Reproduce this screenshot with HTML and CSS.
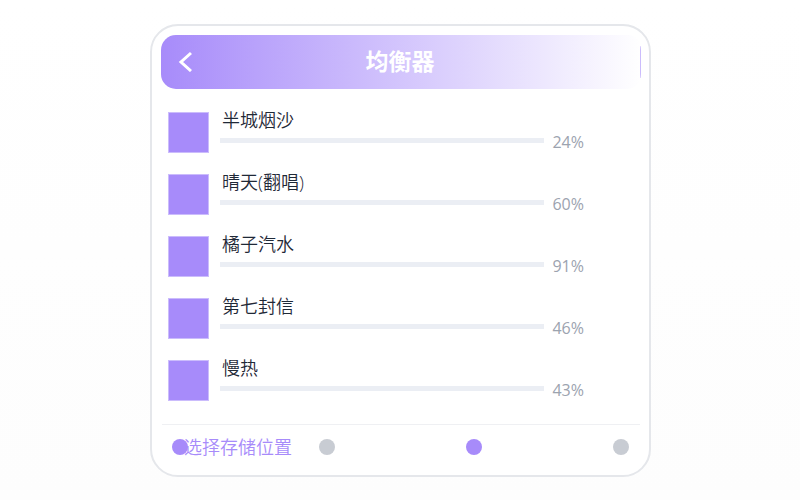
FILE: index.html
```html
<!DOCTYPE html>
<html lang="zh-CN">
<head>
    <meta charset="UTF-8">
    <meta name="viewport" content="width=device-width, initial-scale=1.0">
    <title>均衡器</title>
    <link rel="stylesheet" href="styles.css">
</head>
<body>
    <main class="card">
        <header class="header">
            <button class="back" type="button" aria-label="返回">
                <svg width="14" height="22" viewBox="0 0 14 22" fill="none" stroke="#fff" stroke-width="3">
                    <path d="M13 3 L3 12 L13 21"/>
                </svg>
            </button>
            <h1 class="title">均衡器</h1>
        </header>

        <ul class="list">
            <li class="row">
                <div class="cover"></div>
                <div class="info">
                    <label class="name" for="song1">半城烟沙</label>
                    <progress class="bar" id="song1" value="24" max="100"></progress>
                </div>
                <span class="percent">24%</span>
            </li>
            <li class="row">
                <div class="cover"></div>
                <div class="info">
                    <label class="name" for="song2">晴天(翻唱)</label>
                    <progress class="bar" id="song2" value="60" max="100"></progress>
                </div>
                <span class="percent">60%</span>
            </li>
            <li class="row">
                <div class="cover"></div>
                <div class="info">
                    <label class="name" for="song3">橘子汽水</label>
                    <progress class="bar" id="song3" value="91" max="100"></progress>
                </div>
                <span class="percent">91%</span>
            </li>
            <li class="row">
                <div class="cover"></div>
                <div class="info">
                    <label class="name" for="song4">第七封信</label>
                    <progress class="bar" id="song4" value="46" max="100"></progress>
                </div>
                <span class="percent">46%</span>
            </li>
            <li class="row">
                <div class="cover"></div>
                <div class="info">
                    <label class="name" for="song5">慢热</label>
                    <progress class="bar" id="song5" value="43" max="100"></progress>
                </div>
                <span class="percent">43%</span>
            </li>
        </ul>

        <footer class="footer">
            <div class="dot active"><span class="dot-label">选择存储位置</span></div>
            <div class="dot"></div>
            <div class="dot active"></div>
            <div class="dot"></div>
        </footer>
    </main>
</body>
</html>
```

FILE: styles.css
```css
* {
    box-sizing: border-box;
}
body {
    margin: 0;
    padding: 1px 0 0 1px;
    min-height: 100vh;
    display: flex;
    justify-content: center;
    align-items: center;
    background: linear-gradient(#ffffff, #fdfdfd);
    font-family: "Open Sans", "Noto Sans CJK SC", sans-serif;
    font-weight: 350;
}
.card {
    width: 100%;
    max-width: 501px;
    padding: 9px 8px 8px 9px;
    border: 2px solid #e5e7eb;
    border-radius: 28px;
    background: #fff;
}
.header {
    display: grid;
    grid-template-columns: 48px 1fr 50px;
    align-items: center;
    height: 54px;
    padding-bottom: 2px;
    border-radius: 15px;
    /* thin line at the right end of the fade */
    background:
        linear-gradient(#cbbcfc, #cbbcfc) right center / 1px 32px no-repeat,
        linear-gradient(90deg, #a78bfa, #ffffff);
}
.back {
    display: flex;
    justify-content: center;
    padding: 0;
    border: 0;
    background: none;
    cursor: pointer;
}
.title {
    margin: 0;
    font-size: 23px;
    line-height: 32px;
    font-weight: 700;
    text-align: center;
    color: #fff;
}
.list {
    margin: 0;
    padding: 23px 57px 23px 7px;
    list-style: none;
    display: flex;
    flex-direction: column;
    gap: 21px;
}
.row {
    display: flex;
    height: 41px;
}
.cover {
    width: 41px;
    height: 41px;
    border: 1px solid #cbbcfc;
    background: #a78bfa;
    background-clip: padding-box;
}
.info {
    flex: 1;
    display: flex;
    flex-direction: column;
    margin-left: 11px;
}
.name {
    padding-left: 2px;
    font-size: 18px;
    line-height: 16px;
    color: #1f2937;
}
.bar {
    appearance: none;
    width: 100%;
    height: 5px;
    margin-top: 10px;
    border: 0;
    background: #ebeef4;
}
.bar::-webkit-progress-bar,
.bar::-webkit-progress-value {
    background: #ebeef4;
}
.percent {
    margin-left: 8px;
    padding-top: 20px;
    font-size: 16px;
    line-height: 20px;
    font-weight: 400;
    color: #9ca3af;
}
.footer {
    display: flex;
    justify-content: space-between;
    margin: 0 1px;
    padding: 14px 11px 12px 10px;
    border-top: 1px solid #eff0f3;
}
.dot {
    position: relative;
    width: 16px;
    height: 16px;
    border-radius: 50%;
    background: #c8ccd3;
}
.active {
    background: #a78bfa;
}
.dot-label {
    position: absolute;
    left: 12px;
    top: -1px;
    font-size: 18px;
    line-height: 18px;
    white-space: nowrap;
    color: #a78bfa;
}
```
